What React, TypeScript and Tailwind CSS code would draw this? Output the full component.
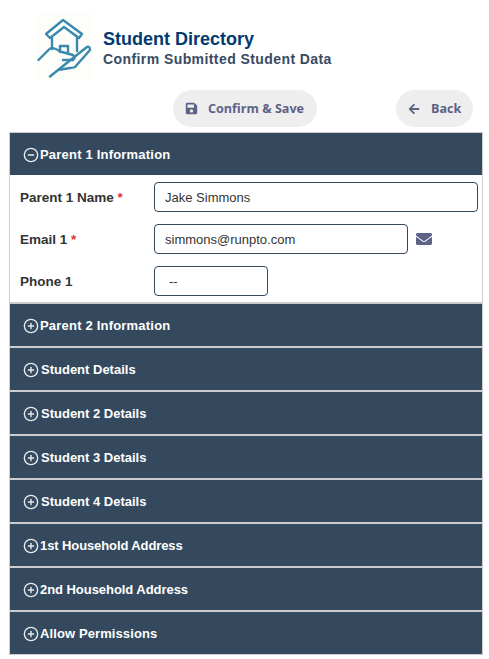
import { CircleMinus, CirclePlus } from 'lucide-react'
import { FaArrowLeft, FaEnvelope, FaSave } from 'react-icons/fa'

const sections = [
  { title: 'Parent 2 Information', text: 'ml-[1px] tracking-[0.2px]' },
  { title: 'Student Details', text: 'ml-[2px]' },
  { title: 'Student 2 Details', text: 'ml-[2px]' },
  { title: 'Student 3 Details', text: 'ml-[2px]' },
  { title: 'Student 4 Details', text: 'ml-[2px]' },
  { title: '1st Household Address', text: 'ml-[1px] tracking-[-0.1px]' },
  { title: '2nd Household Address', text: 'ml-[1px] tracking-[-0.05px]' },
  { title: 'Allow Permissions', text: 'ml-[1px] tracking-[0.1px]' },
]

function Logo() {
  return (
    <div className="w-14 h-[68px] bg-[#fdfdf9]">
      <svg viewBox="0 0 56 68" className="w-14 h-[68px] blur-[0.3px]" fill="none" stroke="#3a8ab0" strokeWidth="2.4" strokeLinecap="round" strokeLinejoin="round">
        <path d="M9 21 L26 7 L45 21 L42 25 L27 14 L13 25 Z" />
        <path d="M15 25 V36" />
        <path d="M40 25 V38" />
        <path d="M23 39 V33 H31 V40" />
        <path d="M1.5 47 L13 35.5 Q17 34 23 38.5 L36 42 Q39 45 36 47 H26" />
        <path d="M36 45 L50 34 Q53 33 53 37 L38 54 Q36 55 33 55 L21 57 L13 63.5 Z" />
      </svg>
    </div>
  )
}

function Field({ label, required, value, width, children }: { label: string; required?: boolean; value: string; width: string; children?: React.ReactNode }) {
  return (
    <div className="flex items-center h-[30px]">
      <div className="w-[134px] pt-[2px] text-[13.5px] font-bold text-[#333]">
        {label}
        {required && <span className="text-[#e0343c]"> *</span>}
      </div>
      <div className={`${width} h-[30px] pt-[2px] flex items-center border border-[#34495e] rounded text-[13px] text-[#333] bg-white`}>
        {value}
      </div>
      {children}
    </div>
  )
}

function PillButton({ icon, label, className }: { icon: React.ReactNode; label: string; className: string }) {
  return (
    <button className={`h-[37px] rounded-full bg-[#eeeeee] flex items-center text-[#5d6287] text-[12.6px] font-bold font-['Open_Sans',sans-serif] ${className}`}>
      {icon}
      <span className="pt-[2px]">{label}</span>
    </button>
  )
}

export default function App() {
  return (
    <div className="w-[489px] h-[659px] bg-white overflow-hidden font-['Liberation_Sans',Arial,sans-serif]">
      <div className="flex items-start h-[90px] pl-[37px] pt-[13px]">
        <Logo />
        <div className="ml-[10px] mt-[16px]">
          <div className="text-[18px] leading-[20px] font-bold text-[#003a70]">Student Directory</div>
          <div className="text-[14px] leading-[20px] font-bold text-[#3a4a63] tracking-[0.42px]">Confirm Submitted Student Data</div>
        </div>
      </div>

      <div className="flex h-[37px] pl-[173px]">
        <PillButton className="w-[144px] pl-[12px]" icon={<FaSave className="w-[13px] h-[13px] mr-[10px]" />} label="Confirm & Save" />
        <PillButton className="w-[77px] ml-[79px] pl-[12px]" icon={<FaArrowLeft className="w-3 h-3 mr-[11px]" />} label="Back" />
      </div>

      <div className="mx-[9px] mt-[5px] w-[474px] border border-[#cccccc]">
        <div className="h-[42px] pt-[2px] bg-[#34495e] flex items-center pl-[13px] text-white text-[13px] font-bold">
          <CircleMinus className="w-4 h-4 text-[#e8ecef]" strokeWidth={2} />
          <span className="ml-[1px] tracking-[0.2px]">Parent 1 Information</span>
        </div>
        <div className="flex flex-col gap-3 pl-[10px] pt-[7px] h-[127px] bg-white">
          <Field label="Parent 1 Name" required value="Jake Simmons" width="w-[324px] pl-[10px]" />
          <Field label="Email 1" required value="simmons@runpto.com" width="w-[254px] pl-[10px]">
            <FaEnvelope className="w-4 h-4 ml-2 text-[#5d6287]" />
          </Field>
          <Field label="Phone 1" value="--" width="w-[114px] pl-[14px]" />
        </div>
        {sections.map((s) => (
          <div key={s.title} className="h-[44px] pt-[2px] border-t-2 border-[#cccccc] bg-[#34495e] flex items-center pl-[13px] text-white text-[13px] font-bold">
            <CirclePlus className="w-4 h-4 text-[#e8ecef]" strokeWidth={2} />
            <span className={s.text}>{s.title}</span>
          </div>
        ))}
      </div>
    </div>
  )
}
